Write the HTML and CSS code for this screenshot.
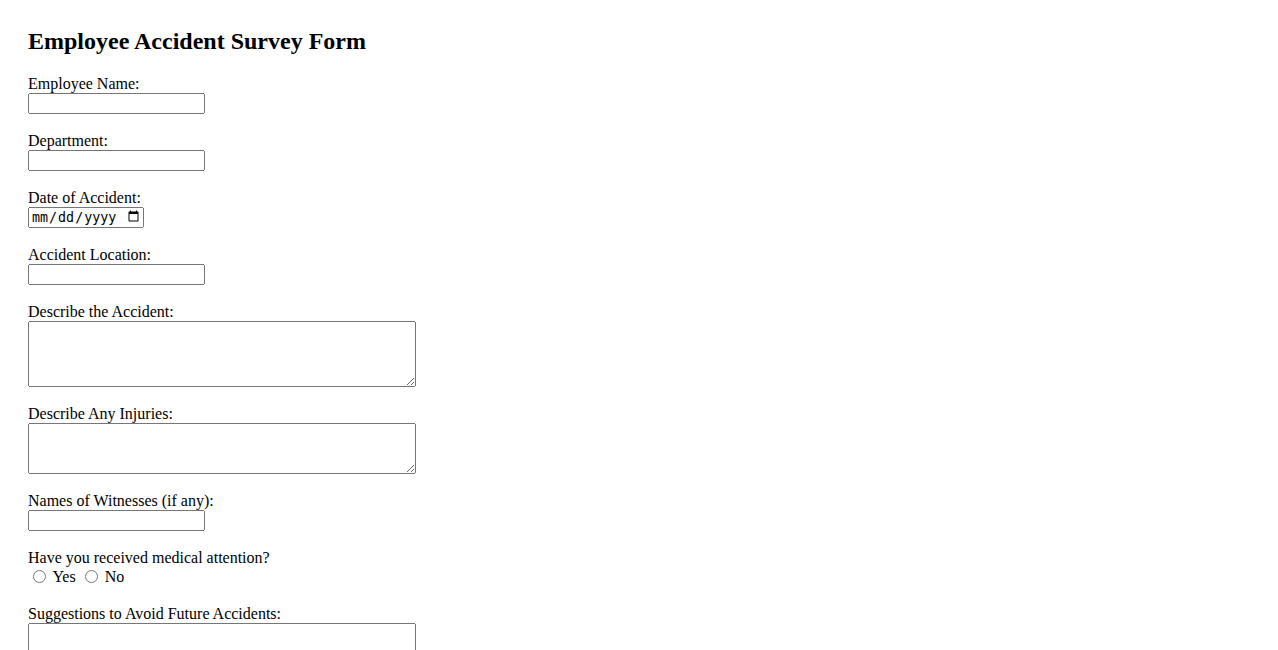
FILE: index.html
```html
<!DOCTYPE html>
<html lang="en">
<head>
<meta charset="utf-8">
<title>Employee Accident Survey Form</title>
<link rel="stylesheet" href="styles.css">
</head>
<body>
<main class="page">
  <h2 class="title">Employee Accident Survey Form</h2>
  <form class="form">
    <div class="field">
      <label class="label" for="name">Employee Name:</label>
      <input class="text" type="text" id="name" name="name">
    </div>
    <div class="field">
      <label class="label" for="dept">Department:</label>
      <input class="text" type="text" id="dept" name="dept">
    </div>
    <div class="field">
      <label class="label" for="date">Date of Accident:</label>
      <input class="date" type="date" id="date" name="date">
    </div>
    <div class="field">
      <label class="label" for="loc">Accident Location:</label>
      <input class="text" type="text" id="loc" name="loc">
    </div>
    <div class="field">
      <label class="label" for="desc">Describe the Accident:</label>
      <textarea class="area area-4" id="desc" name="desc" rows="4"></textarea>
    </div>
    <div class="field">
      <label class="label" for="inj">Describe Any Injuries:</label>
      <textarea class="area area-3" id="inj" name="inj" rows="3"></textarea>
    </div>
    <div class="field">
      <label class="label" for="wit">Names of Witnesses (if any):</label>
      <input class="text" type="text" id="wit" name="wit">
    </div>
    <div class="field">
      <span class="label">Have you received medical attention?</span>
      <div class="radios"><input class="radio" type="radio" id="med-yes" name="med" value="yes"><label class="opt" for="med-yes"> Yes</label> <input class="radio" type="radio" id="med-no" name="med" value="no"><label class="opt" for="med-no"> No</label></div>
    </div>
    <div class="field">
      <label class="label" for="sug">Suggestions to Avoid Future Accidents:</label>
      <textarea class="area area-4" id="sug" name="sug" rows="4"></textarea>
    </div>
  </form>
</main>
</body>
</html>
```

FILE: styles.css
```css
html, body {
  margin: 0;
  padding: 0;
  background: #ffffff;
}

body {
  font-family: "Liberation Serif", "Times New Roman", serif;
  font-size: 16px;
  color: #000000;
}

.page {
  padding: 28px 28px;
}

.title {
  margin: 0 0 19px 0;
  font-size: 24px;
  font-weight: bold;
  line-height: 27.6px;
}

.form {
  display: flex;
  flex-direction: column;
}

.field {
  display: flex;
  flex-direction: column;
  align-items: flex-start;
  margin-bottom: 18px;
}

.label {
  display: block;
  height: 18px;
  line-height: 18px;
}

.text {
  box-sizing: border-box;
  width: 177px;
  height: 21px;
  margin: 0;
}

.date {
  box-sizing: border-box;
  width: 116px;
  height: 21px;
  margin: 0;
}

.area {
  box-sizing: border-box;
  width: 388px;
  margin: 0;
}

.area-4 {
  height: 66px;
}

.area-3 {
  height: 51px;
}

.radios {
  height: 20px;
  line-height: 20px;
}

.radio {
  margin: 3px 3px 0 5px;
  vertical-align: -1px;
}
```
